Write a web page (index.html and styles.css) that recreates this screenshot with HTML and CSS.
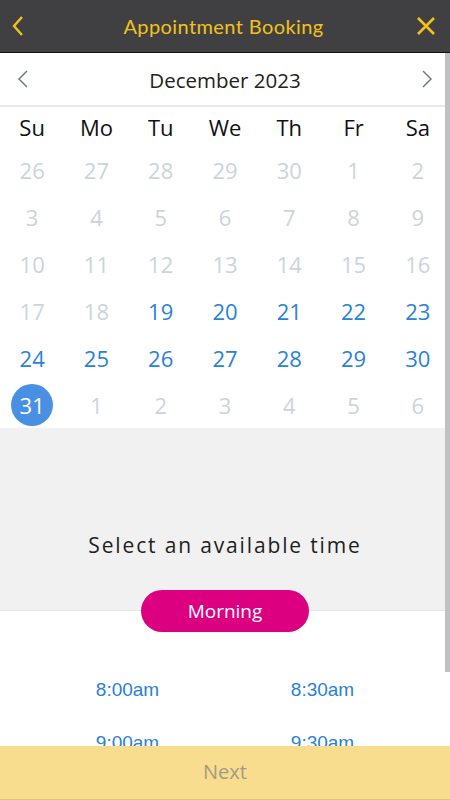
FILE: index.html
```html
<!DOCTYPE html>
<html lang="en">
<head>
<meta charset="UTF-8">
<meta name="viewport" content="width=device-width, initial-scale=1.0">
<title>Appointment Booking</title>
<link rel="stylesheet" href="styles.css">
</head>
<body>
<div class="app">
  <!-- Header -->
  <div class="header">
    <span class="header-btn">
      <svg width="14" height="22" viewBox="0 0 14 22"><path d="M11 2 L3 11 L11 20" fill="none" stroke="#f2c21b" stroke-width="2.4"/></svg>
    </span>
    <h1>Appointment Booking</h1>
    <span class="header-btn">
      <svg width="20" height="20" viewBox="0 0 20 20"><path d="M2 2 L18 18 M18 2 L2 18" fill="none" stroke="#f2c21b" stroke-width="2.6"/></svg>
    </span>
  </div>

  <div class="main">
    <!-- Calendar -->
    <div class="calendar">
      <div class="month-row">
        <svg width="12" height="18" viewBox="0 0 12 18"><path d="M10 1 L2 9 L10 17" fill="none" stroke="#6e7b85" stroke-width="1.5"/></svg>
        <span class="month-title">December 2023</span>
        <svg width="12" height="18" viewBox="0 0 12 18"><path d="M2 1 L10 9 L2 17" fill="none" stroke="#6e7b85" stroke-width="1.5"/></svg>
      </div>
      <div class="week-row">
        <span>Su</span><span>Mo</span><span>Tu</span><span>We</span><span>Th</span><span>Fr</span><span>Sa</span>
      </div>
      <div class="days" id="days"></div>
    </div>

    <!-- Time selection -->
    <div class="time-intro">
      <h2>Select an available time</h2>
    </div>
    <div class="times">
      <button class="period-btn">Morning</button>
      <div class="time-grid">
        <a class="slot">8:00am</a><a class="slot">8:30am</a>
        <a class="slot">9:00am</a><a class="slot">9:30am</a>
        <a class="slot">10:00am</a><a class="slot">10:30am</a>
      </div>
    </div>

    <div class="scroll-thumb"></div>
  </div>

  <div class="footer">Next</div>
</div>

<script>
// Build December 2023 grid
const daysEl = document.getElementById('days');
const cells = [];
[26, 27, 28, 29, 30].forEach(d => cells.push({ n: d, type: 'off' }));
for (let d = 1; d <= 31; d++) {
  let type = d < 19 ? 'off' : 'open';
  if (d === 31) type = 'selected';
  cells.push({ n: d, type: type });
}
for (let d = 1; d <= 6; d++) cells.push({ n: d, type: 'off' });

cells.forEach(c => {
  const el = document.createElement('div');
  el.classList.add('day', 'day-' + c.type);
  el.innerHTML = '<span>' + c.n + '</span>';
  daysEl.appendChild(el);
});
</script>
</body>
</html>
```

FILE: styles.css
```css
/* General styles */
body {
  margin: 0;
  padding: 0;
  font-family: "Open Sans", sans-serif;
  background-color: #fff;
}

.app {
  width: 450px;
  height: 800px;
  display: flex;
  flex-direction: column;
  overflow: hidden;
}

/* Header */
.header {
  height: 52px;
  flex-shrink: 0;
  background-color: #404042;
  border-bottom: 1px solid #111;
  display: flex;
  align-items: center;
  justify-content: space-between;
  padding: 0 14px 0 11px;
}

.header h1 {
  margin: 0 0 0 6px;
  font-family: Lato, sans-serif;
  font-weight: 400;
  font-size: 20px;
  color: #f2c21b;
  letter-spacing: 0.4px;
}

.header-btn {
  display: flex;
  align-items: center;
}

/* Main area */
.main {
  flex: 1;
  position: relative;
  overflow: hidden;
}

.scroll-thumb {
  position: absolute;
  top: 0;
  right: 0;
  width: 5px;
  height: 619px;
  background-color: #c1c1c1;
}

/* Calendar */
.calendar {
  background-color: #fff;
}

.month-row {
  height: 52px;
  display: flex;
  align-items: center;
  justify-content: space-between;
  padding: 0 17px;
  border-bottom: 2px solid #e6eaed;
}

.month-title {
  font-size: 20.5px;
  color: #222;
  padding-top: 2px;
}

.week-row {
  display: grid;
  grid-template-columns: repeat(7, 1fr);
  height: 38px;
  padding-top: 1px;
  align-items: center;
  text-align: center;
  font-size: 22px;
  color: #111;
}

.days {
  display: grid;
  grid-template-columns: repeat(7, 1fr);
  grid-auto-rows: 47px;
}

.day {
  display: flex;
  align-items: center;
  justify-content: center;
  font-size: 22px;
}

.day span {
  width: 42px;
  height: 42px;
  display: flex;
  align-items: center;
  justify-content: center;
  border-radius: 50%;
}

.day-off {
  color: #cdd4d8;
}

.day-open {
  color: #2a82d8;
}

.day-selected span {
  background-color: #4a90e2;
  color: #fff;
}

/* Time section */
.time-intro {
  background-color: #f1f1f1;
  height: 182px;
  border-bottom: 1px solid #e3e8eb;
  display: flex;
  align-items: flex-end;
  justify-content: center;
}

.time-intro h2 {
  margin: 0 0 51px;
  font-weight: 400;
  font-size: 21px;
  letter-spacing: 1.85px;
  color: #1e1e1e;
}

.times {
  display: flex;
  flex-direction: column;
  align-items: center;
}

.period-btn {
  margin-top: -21px;
  width: 168px;
  height: 42px;
  border: none;
  border-radius: 21px;
  background-color: #dc0080;
  color: #fff;
  font-family: "Open Sans", sans-serif;
  font-size: 19px;
  cursor: pointer;
}

.time-grid {
  width: 390px;
  margin-top: 31px;
  display: grid;
  grid-template-columns: 1fr 1fr;
  grid-auto-rows: 53px;
  align-items: center;
  text-align: center;
}

.slot {
  font-family: "Liberation Sans", Arial, sans-serif;
  font-size: 19px;
  color: #2a7fd6;
  cursor: pointer;
}

/* Footer */
.footer {
  height: 50px;
  padding-bottom: 3px;
  flex-shrink: 0;
  background-color: #f7dd8d;
  border-bottom: 1px solid #d9c47e;
  display: flex;
  align-items: center;
  justify-content: center;
  font-size: 20px;
  color: #a39b86;
}
```
